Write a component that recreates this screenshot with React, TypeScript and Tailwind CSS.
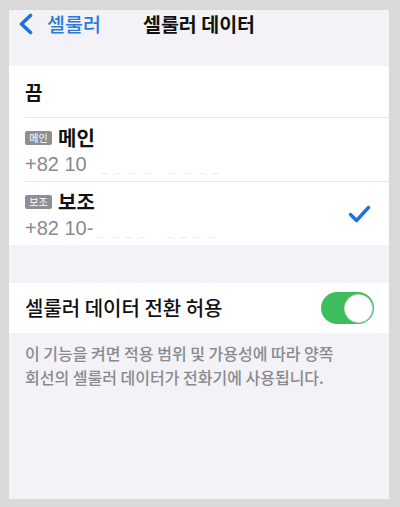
import { ReactNode } from "react";

const KR = "font-['Noto_Sans_CJK_KR',sans-serif]";

function Badge({ label }: { label: string }) {
  return (
    <span className="inline-flex h-[14px] w-[27px] items-center justify-center rounded-[2px] bg-[#8e8e93] text-[10px] leading-none text-white">
      {label}
    </span>
  );
}

// masked digits after the country/area code
function Mask({ offset }: { offset: string }) {
  return (
    <span className={"flex items-end gap-[7px] self-end pb-[2px] " + offset}>
      {[0, 1, 2, 3].map((i) => (
        <span key={i} className="h-[1px] w-[7px] bg-[#ededf0]" />
      ))}
      <span className="w-[6px]" />
      {[0, 1, 2, 3].map((i) => (
        <span key={"b" + i} className="h-[1px] w-[7px] bg-[#ededf0]" />
      ))}
    </span>
  );
}

function LineRow({
  badge,
  title,
  number,
  maskOffset,
  checked,
}: {
  badge: string;
  title: string;
  number: string;
  maskOffset: string;
  checked?: boolean;
}) {
  return (
    <div className="flex h-[63px] items-center pr-[18px]">
      <div className="flex flex-1 flex-col pt-[4px]">
        <div className="flex h-[22px] items-center gap-[6px]">
          <Badge label={badge} />
          <span className="text-[20px] font-bold leading-none text-[#111]">{title}</span>
        </div>
        <div className="mt-[3px] flex h-[24px] items-center text-[20px] leading-none text-[#8a8a8e] font-['Liberation_Sans',sans-serif]">
          {number}
          <Mask offset={maskOffset} />
        </div>
      </div>
      {checked && (
        <svg width="23" height="18" viewBox="0 0 23 18" fill="none">
          <path
            d="M2.5 9.5 L8.5 15.5 L20.5 2.5"
            stroke="#1f72dd"
            strokeWidth="3.4"
            strokeLinecap="round"
            strokeLinejoin="round"
          />
        </svg>
      )}
    </div>
  );
}

function Group({ children }: { children: ReactNode }) {
  return <div className="flex flex-col bg-white pl-[16px]">{children}</div>;
}

function Toggle({ on }: { on: boolean }) {
  return (
    <div
      className={
        "flex h-[32px] w-[53px] items-center rounded-full p-[1.5px] " +
        (on ? "justify-end bg-[#3dbd5d]" : "justify-start bg-[#e5e5ea]")
      }
    >
      <div className="h-[29px] w-[29px] rounded-full border border-[#d6d6d6] bg-white" />
    </div>
  );
}

export default function App() {
  return (
    <div className={"h-[507px] w-[400px] bg-[#d9d9d9] pb-[8px] pl-[9px] pr-[11px] pt-[10px] " + KR}>
      <div className="flex h-full flex-col bg-[#f2f2f7]">
        <nav className="h-[56px]">
          <div className="mt-[1px] grid h-[25px] grid-cols-[1fr_auto_1fr] items-center">
            <div className="flex items-center gap-[13px] pl-[9px] text-[#2a7ad9]">
              <svg width="16" height="22" viewBox="0 0 16 22" fill="none">
                <path
                  d="M12.5 2.5 L3.5 11 L12.5 19.5"
                  stroke="#1f72dd"
                  strokeWidth="3.6"
                  strokeLinecap="round"
                  strokeLinejoin="round"
                />
              </svg>
              <span className="text-[19.5px] font-medium leading-none">셀룰러</span>
            </div>
            <h1 className="text-[19.5px] font-bold leading-none text-[#111]">셀룰러 데이터</h1>
            <div />
          </div>
        </nav>

        <Group>
          <div className="flex h-[52px] items-center border-b border-[#e7e7ea]">
            <span className="text-[19px] font-bold leading-none text-[#111]">끔</span>
          </div>
          <div className="border-b border-[#e7e7ea]">
            <LineRow badge="메인" title="메인" number="+82 10" maskOffset="ml-[14px]" />
          </div>
          <LineRow badge="보조" title="보조" number="+82 10-" maskOffset="ml-[4px]" checked />
        </Group>

        <div className="h-[38px]" />

        <div className="flex h-[50px] items-center justify-between bg-white pl-[16px] pr-[15px]">
          <span className="text-[20px] font-medium leading-none text-[#111]">셀룰러 데이터 전환 허용</span>
          <Toggle on />
        </div>

        <p className="pl-[16px] pr-[10px] pt-[8px] text-[16px] font-medium leading-[24px] text-[#8a8a8e]">
          이 기능을 켜면 적용 범위 및 가용성에 따라 양쪽
          <br />
          회선의 셀룰러 데이터가 전화기에 사용됩니다.
        </p>
      </div>
    </div>
  );
}
